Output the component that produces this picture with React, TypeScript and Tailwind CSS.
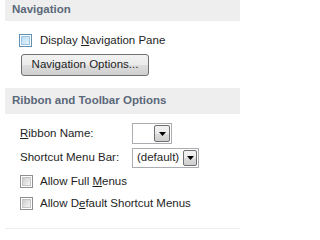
import React from "react";

function CheckBox({ hot = false }: { hot?: boolean }) {
  return (
    <span
      className={
        "flex h-[13px] w-[13px] shrink-0 items-center justify-center border bg-white " +
        (hot ? "border-[#5f8fb4]" : "border-[#8f8f8f]")
      }
    >
      <span
        className={
          "h-[9px] w-[9px] " +
          (hot
            ? "bg-[linear-gradient(135deg,#b9dcf3_0%,#e6f3fc_100%)] border border-[#9cc5e4]"
            : "bg-[linear-gradient(135deg,#cdcdcd_0%,#f5f5f5_100%)] border border-[#c4c4c4]")
        }
      />
    </span>
  );
}

function Arrow() {
  return (
    <svg width="7" height="4" viewBox="0 0 7 4" className="block">
      <polygon points="0,0 7,0 3.5,4" fill="#000" />
    </svg>
  );
}

function Combo({ value, width, btn }: { value?: string; width: string; btn: string }) {
  return (
    <div className={"flex h-[21px] items-stretch border border-[#abadb3] bg-white p-[1px] " + width}>
      <span className="flex flex-1 items-center pl-[3px] leading-none">{value}</span>
      <span
        className={
          "flex items-center justify-center rounded-[2px] border border-[#707070] bg-[linear-gradient(to_bottom,#f2f2f2_0%,#ebebeb_50%,#dddddd_50%,#cfcfcf_100%)] " +
          btn
        }
      >
        <Arrow />
      </span>
    </div>
  );
}

function Header({ children, tall }: { children: React.ReactNode; tall?: boolean }) {
  return (
    <div
      className={
        "flex items-center bg-[#eeeeee] pl-[7px] text-[11.5px] font-bold text-[#5b6879] " +
        (tall ? "h-[26px]" : "h-[21px] pb-[1px]")
      }
    >
      {children}
    </div>
  );
}

export default function App() {
  return (
    <div className="h-[229px] w-[240px] overflow-hidden bg-white pl-[5px] font-['Liberation_Sans',Arial,sans-serif] text-[11.5px] text-[#1e1e1e]">
      <Header>Navigation</Header>

      <div className="pl-[14px]">
        <label className="mt-[13px] flex h-[13px] items-center gap-[8px] leading-none">
          <CheckBox hot />
          <span>
            Display <u>N</u>avigation Pane
          </span>
        </label>
        <button className="ml-[2px] mt-[7px] flex h-[22px] w-[128px] items-center justify-center rounded-[3px] border border-[#707070] bg-[linear-gradient(to_bottom,#f2f2f2_0%,#ebebeb_50%,#dddddd_50%,#cfcfcf_100%)] leading-none">
          Navigation Options...
        </button>
      </div>

      <div className="mt-[12px]">
        <Header tall>Ribbon and Toolbar Options</Header>
      </div>

      <div className="pl-[15px]">
        <div className="mt-[9px] grid grid-cols-[112px_auto] items-center gap-y-[4px]">
          <span>
            <u>R</u>ibbon Name:
          </span>
          <Combo width="w-[40px]" btn="w-[16px]" />
          <span>Shortcut Menu Bar:</span>
          <div className="h-[20px]">
            <Combo value="(default)" width="w-[67px] !h-[20px]" btn="w-[14px]" />
          </div>
        </div>

        <label className="mt-[7px] flex h-[13px] items-center gap-[7px] leading-none">
          <CheckBox />
          <span>
            Allow Full <u>M</u>enus
          </span>
        </label>
        <label className="mt-[9px] flex h-[13px] items-center gap-[7px] leading-none">
          <CheckBox />
          <span>
            Allow D<u>e</u>fault Shortcut Menus
          </span>
        </label>
      </div>

      <div className="mt-[18px] h-[10px] bg-[#eeeeee]" />
    </div>
  );
}
